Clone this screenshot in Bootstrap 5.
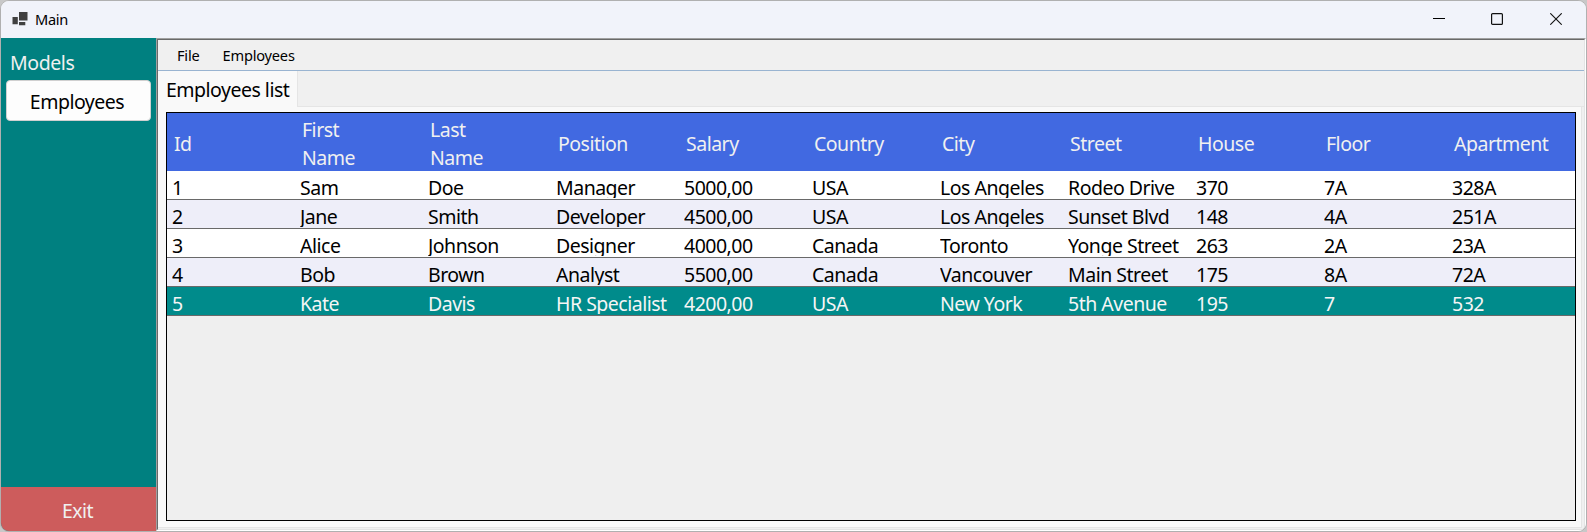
<!DOCTYPE html>
<html lang="en">
<head>
<meta charset="utf-8">
<title>Main</title>
<link href="https://cdn.jsdelivr.net/npm/bootstrap@5.3.0/dist/css/bootstrap.min.css" rel="stylesheet">
<style>
  html, body { height: 100%; }
  body { background: #c8c8c8; font-family: "Noto Sans", "Open Sans", sans-serif; font-size: 19.5px; line-height: 28px; letter-spacing: -.5px; color: #000; overflow: hidden; }
  .app-window { height: 532px; border: 1px solid #b0b0b0; border-radius: 9px; background: #f0f0f0; }
  .title-bar { height: 37px; background: #f1f3fa; font-size: 14.6px; letter-spacing: -.3px; padding: 0 1px 2px 11px; }
  .title-bar .caption { margin-left: 7px; }
  .win-btn { width: 58.5px; height: 28px; }
  .sidebar { width: 155px; background: #008080; }
  .sidebar .heading { color: #f0f0f0; padding: 11px 0 0 9px; height: 42px; letter-spacing: -.4px; }
  .side-btn { height: 41px; margin: 0 5px; background: #fdfdfd; border: 1px solid #d0d0d0; border-radius: 4px; padding: 3px 3px 0 0; font: inherit; letter-spacing: inherit; line-height: 28px; color: #000; }
  .exit-btn { height: 44px; background: #cd5c5c; color: #f0f0f0; border: 0; border-radius: 0; padding: 4px 2px 0 0; font: inherit; letter-spacing: inherit; }
  .mdi-outer { border-left: 1px solid #a0a0a0; border-top: 1px solid #a0a0a0; border-right: 1px solid #fff; border-bottom: 1px solid #fff; margin: 0 1px 0 0; }
  .mdi-inner { border-left: 1px solid #696969; border-top: 1px solid #696969; border-right: 1px solid #e3e3e3; border-bottom: 1px solid #e3e3e3; }
  .menu-bar { height: 31px; border-bottom: 1px solid #99b4d1; font-size: 14.6px; letter-spacing: -.2px; padding-left: 19px; gap: 23px; }
  .tab-strip { height: 36px; }
  .tab-head { width: 140px; background: #f9f9f9; border-right: 1px solid #e5e5e5; padding: 5px 0 0 8px; white-space: nowrap; }
  .tab-rest { border-bottom: 1px solid #e5e5e5; }
  .tab-body { background: #f9f9f9; padding: 5px 5px 6px 8px; border-right: 1px solid #e5e5e5; border-bottom: 1px solid #e5e5e5; margin: 0 2px 1px 0; }
  .grid-box { border: 1px solid #000; background: #efefef; }
  .emp-table { table-layout: fixed; width: 1408px; border-collapse: separate; border-spacing: 0; }
  .emp-table th { height: 58px; background: #4169e1; color: #f0f0f0; font-weight: 400; padding: 3px 40px 0 7px; vertical-align: top; }
  .emp-table th.one-line { padding: 4px 0 0 7px; vertical-align: middle; }
  .two-line { height: 55px; }
  .emp-table td { height: 29px; padding: 0 0 0 5px; border-bottom: 1px solid #696969; background: #fff; vertical-align: top; }
  .emp-table td div { height: 27px; line-height: 20px; padding-top: 7px; overflow: hidden; white-space: nowrap; }
  .emp-table tr:nth-child(even) td { background: #eeeef9; }
  .emp-table tr.picked td { background: #008b8b; color: #f5f5f5; }
</style>
</head>
<body>
<div class="app-window d-flex flex-column overflow-hidden">
  <header class="title-bar d-flex align-items-center flex-shrink-0">
    <svg width="16" height="16" viewBox="0 0 16 16"><g fill="#404040"><path d="M7 1h8.5v8.5H7zM.5 6H5.8v7.2H.5zM7 11h6.3v3.2H7z"/></g></svg>
    <span class="caption me-auto">Main</span>
    <span class="win-btn d-flex align-items-center justify-content-center"><svg width="12" height="12" viewBox="0 0 12 12"><path d="M0 5.5h12" stroke="#000"/></svg></span>
    <span class="win-btn d-flex align-items-center justify-content-center"><svg width="12" height="12" viewBox="0 0 12 12"><rect x=".6" y=".6" width="10.8" height="10.8" rx="1" fill="none" stroke="#111" stroke-width="1.2"/></svg></span>
    <span class="win-btn d-flex align-items-center justify-content-center"><svg width="12" height="12" viewBox="0 0 12 12"><path d="M.3.3l11.4 11.4M11.7.3L.3 11.7" stroke="#111" stroke-width="1.1"/></svg></span>
  </header>
  <div class="d-flex flex-grow-1">
    <aside class="sidebar d-flex flex-column flex-shrink-0">
      <div class="heading">Models</div>
      <button class="side-btn text-center">Employees</button>
      <button class="exit-btn mt-auto">Exit</button>
    </aside>
    <main class="mdi-outer flex-grow-1 d-flex">
      <div class="mdi-inner flex-grow-1 d-flex flex-column">
        <nav class="menu-bar d-flex align-items-center"><span>File</span><span>Employees</span></nav>
        <div class="tab-strip d-flex"><div class="tab-head">Employees list</div><div class="tab-rest flex-grow-1"></div></div>
        <section class="tab-body flex-grow-1 d-flex">
          <div class="grid-box flex-grow-1">
            <table class="emp-table">
              <thead><tr><th class="one-line">Id</th><th><div class="two-line">First Name</div></th><th><div class="two-line">Last Name</div></th><th class="one-line">Position</th><th class="one-line">Salary</th><th class="one-line">Country</th><th class="one-line">City</th><th class="one-line">Street</th><th class="one-line">House</th><th class="one-line">Floor</th><th class="one-line">Apartment</th></tr></thead>
              <tbody>
                <tr><td><div>1</div></td><td><div>Sam</div></td><td><div>Doe</div></td><td><div>Manager</div></td><td><div>5000,00</div></td><td><div>USA</div></td><td><div>Los Angeles</div></td><td><div>Rodeo Drive</div></td><td><div>370</div></td><td><div>7A</div></td><td><div>328A</div></td></tr>
                <tr><td><div>2</div></td><td><div>Jane</div></td><td><div>Smith</div></td><td><div>Developer</div></td><td><div>4500,00</div></td><td><div>USA</div></td><td><div>Los Angeles</div></td><td><div>Sunset Blvd</div></td><td><div>148</div></td><td><div>4A</div></td><td><div>251A</div></td></tr>
                <tr><td><div>3</div></td><td><div>Alice</div></td><td><div>Johnson</div></td><td><div>Designer</div></td><td><div>4000,00</div></td><td><div>Canada</div></td><td><div>Toronto</div></td><td><div>Yonge Street</div></td><td><div>263</div></td><td><div>2A</div></td><td><div>23A</div></td></tr>
                <tr><td><div>4</div></td><td><div>Bob</div></td><td><div>Brown</div></td><td><div>Analyst</div></td><td><div>5500,00</div></td><td><div>Canada</div></td><td><div>Vancouver</div></td><td><div>Main Street</div></td><td><div>175</div></td><td><div>8A</div></td><td><div>72A</div></td></tr>
                <tr class="picked"><td><div>5</div></td><td><div>Kate</div></td><td><div>Davis</div></td><td><div>HR Specialist</div></td><td><div>4200,00</div></td><td><div>USA</div></td><td><div>New York</div></td><td><div>5th Avenue</div></td><td><div>195</div></td><td><div>7</div></td><td><div>532</div></td></tr>
              </tbody>
            </table>
          </div>
        </section>
      </div>
    </main>
  </div>
</div>
<script src="https://cdn.jsdelivr.net/npm/bootstrap@5.3.0/dist/js/bootstrap.bundle.min.js"></script>
</body>
</html>
